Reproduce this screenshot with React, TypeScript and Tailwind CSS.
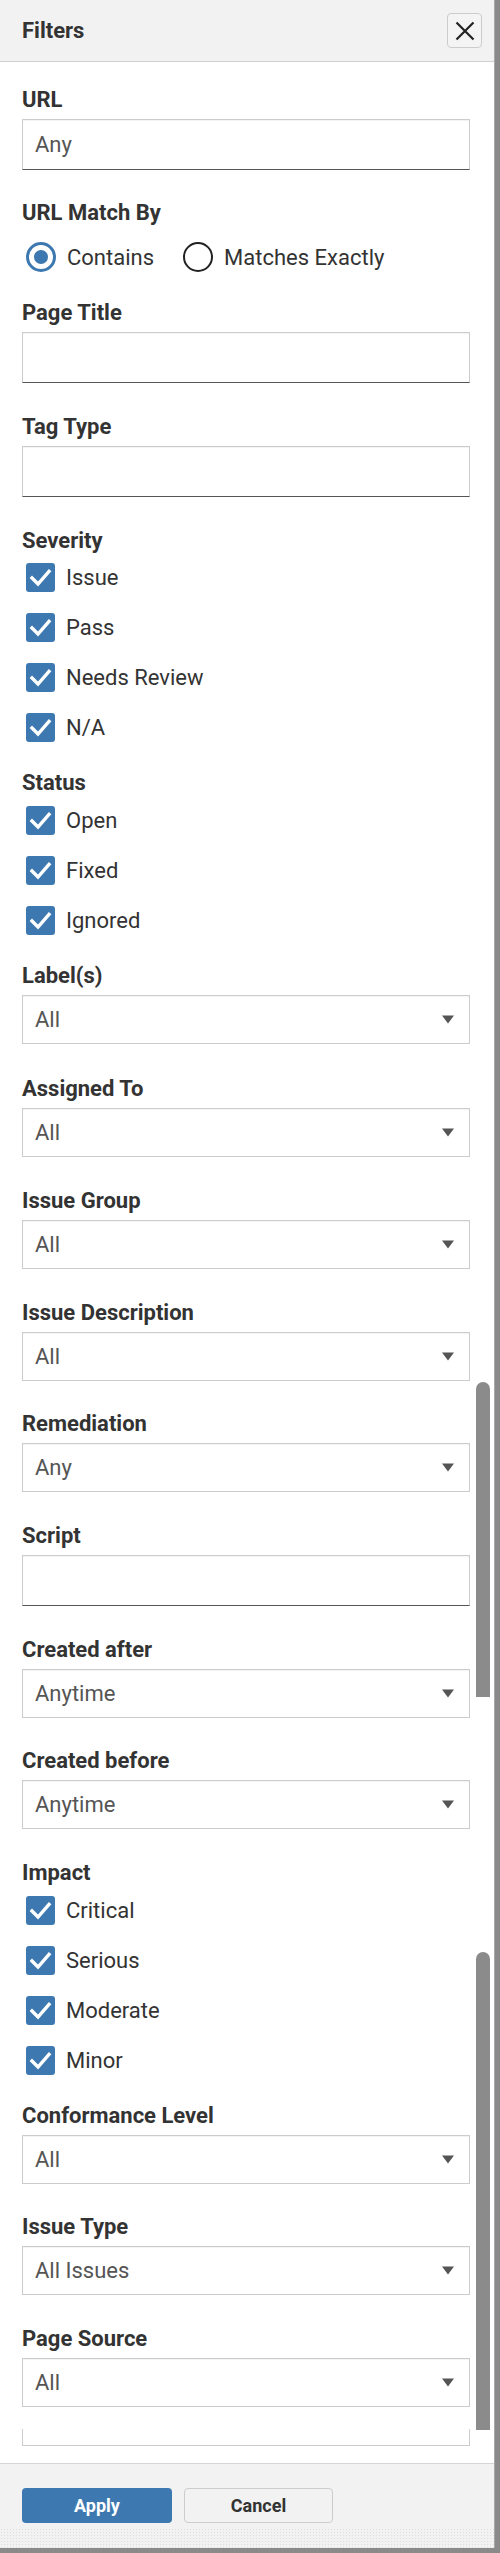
import React from "react";

const Label = ({ children }: { children: React.ReactNode }) => (
  <div className="text-[22px] leading-[24px] font-bold text-[#333]">{children}</div>
);

const Arrow = () => (
  <svg width="12" height="9" viewBox="0 0 12 9" className="shrink-0">
    <path d="M0 0.5 L12 0.5 L6 8.5 Z" fill="#555" />
  </svg>
);

function TextField({ label, value = "" }: { label: string; value?: string }) {
  return (
    <div className="mb-[31.7px]">
      <Label>{label}</Label>
      <div className="mt-[7px] h-[51px] border border-[#ccc] border-b-[#555] bg-white px-[12px] flex items-center text-[22px] text-[#555] shadow-[inset_0_1px_1px_rgba(0,0,0,0.05)]">
        {value}
      </div>
    </div>
  );
}

function SelectField({ label, value, mb = "mb-[31.7px]" }: { label: string; value: string; mb?: string }) {
  return (
    <div className={mb}>
      <Label>{label}</Label>
      <div className="mt-[7px] h-[49px] border border-[#ccc] bg-white pl-[12px] pr-[15px] flex items-center justify-between text-[22px] text-[#555] shadow-[inset_0_1px_1px_rgba(0,0,0,0.05)]">
        <span>{value}</span>
        <Arrow />
      </div>
    </div>
  );
}

const Check = () => (
  <div className="ml-[4px] w-[29px] h-[29px] rounded-[3px] bg-[#3d79b0] shrink-0 flex items-center justify-center">
    <svg width="29" height="29" viewBox="0 0 29 29">
      <polyline points="6,15 12,21 23,8.5" fill="none" stroke="white" strokeWidth="3.4" strokeLinecap="square" />
    </svg>
  </div>
);

function CheckGroup({ label, items }: { label: string; items: string[] }) {
  return (
    <div className="mb-[18.5px]">
      <Label>{label}</Label>
      {items.map((it) => (
        <div key={it} className="h-[50px] flex items-center gap-[11px] text-[22px] text-[#333]">
          <Check />
          <span>{it}</span>
        </div>
      ))}
    </div>
  );
}

export default function App() {
  return (
    <div className="w-[500px] h-[2553px] bg-[#8a8a8a] flex font-['Roboto','Liberation_Sans',sans-serif] overflow-hidden">
      <div className="relative w-[494px] h-[2548px] bg-white flex flex-col">
        {/* header */}
        <div className="h-[62px] shrink-0 bg-[#f2f2f2] border-b border-[#cfcfcf] flex items-center justify-between pl-[22px] pr-[12px]">
          <div className="text-[22px] font-bold text-[#333]">Filters</div>
          <button className="w-[35px] h-[35px] border border-[#ccc] rounded-[4px] bg-[#f4f4f4] flex items-center justify-center">
            <svg width="20" height="20" viewBox="0 0 20 20">
              <path d="M1.5 1.5 L18.5 18.5 M18.5 1.5 L1.5 18.5" stroke="#222" strokeWidth="2.2" />
            </svg>
          </button>
        </div>

        {/* body */}
        <div className="flex-1 pl-[22px] pr-[24px] pt-[25.7px]">
          <TextField label="URL" value="Any" />

          <div className="mb-[19px]">
            <Label>URL Match By</Label>
            <div className="mt-[7px] h-[50px] flex items-center text-[22px] text-[#333]">
              <div className="ml-[4px] w-[30px] h-[30px] rounded-full border-[3px] border-[#3d79b0] flex items-center justify-center">
                <div className="w-[14px] h-[14px] rounded-full bg-[#3d79b0]" />
              </div>
              <span className="ml-[11px]">Contains</span>
              <div className="ml-[29px] w-[30px] h-[30px] rounded-full border-[2.5px] border-[#222]" />
              <span className="ml-[11px]">Matches Exactly</span>
            </div>
          </div>

          <TextField label="Page Title" />
          <TextField label="Tag Type" />

          <CheckGroup label="Severity" items={["Issue", "Pass", "Needs Review", "N/A"]} />
          <CheckGroup label="Status" items={["Open", "Fixed", "Ignored"]} />

          <SelectField label="Label(s)" value="All" mb="mb-[33.5px]" />
          <SelectField label="Assigned To" value="All" />
          <SelectField label="Issue Group" value="All" />
          <SelectField label="Issue Description" value="All" />
          <SelectField label="Remediation" value="Any" />
          <TextField label="Script" />
          <SelectField label="Created after" value="Anytime" />
          <SelectField label="Created before" value="Anytime" />

          <CheckGroup label="Impact" items={["Critical", "Serious", "Moderate", "Minor"]} />

          <SelectField label="Conformance Level" value="All" />
          <SelectField label="Issue Type" value="All Issues" />
          <SelectField label="Page Source" value="All" mb="mb-[21.9px]" />

          {/* partly scrolled-off field */}
          <div className="h-[17.3px] border-x border-b border-[#ccc]" />
        </div>

        {/* footer */}
        <div className="h-[84.7px] shrink-0 bg-[#f2f2f2] border-t border-[#d4d4d4] flex flex-col">
          <div className="pt-[24px] pl-[22px] flex gap-[12px]">
            <button className="w-[150px] h-[35px] rounded-[4px] bg-[#3d79b0] text-white text-[18px] font-bold">Apply</button>
            <button className="w-[149px] h-[35px] rounded-[4px] border border-[#ccc] bg-[#f2f2f2] text-[#333] text-[18px] font-bold">Cancel</button>
          </div>
          <div className="mt-auto h-[20px] bg-[radial-gradient(circle,#dedede_0.7px,transparent_0.9px)] bg-size-[3px_3px]" />
        </div>

        {/* scrollbar thumbs */}
        <div className="absolute left-[476px] top-[1382px] w-[14px] h-[315px] rounded-t-[7px] bg-[#8b8b8b]" />
        <div className="absolute left-[476px] top-[1952px] w-[14px] h-[478px] rounded-t-[7px] bg-[#8b8b8b]" />
      </div>
      <div className="w-[6px] h-[2548px] border-l border-[#a8a8a8] bg-[#8a8a8a]" />
    </div>
  );
}
